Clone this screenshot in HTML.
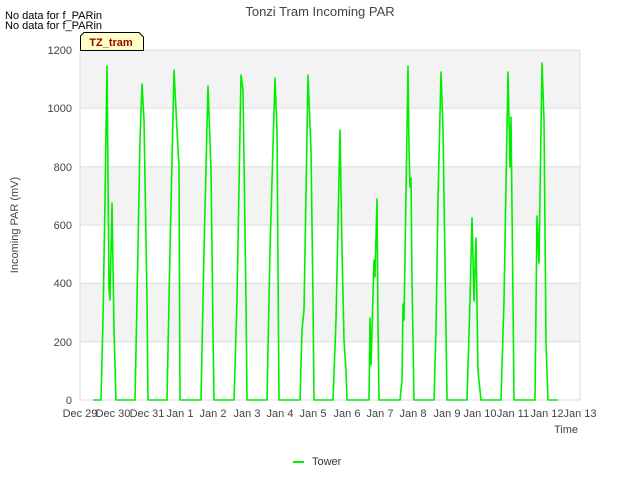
<!DOCTYPE html>
<html><head><style>
html,body{margin:0;padding:0;background:#fff;width:640px;height:480px;overflow:hidden;font-family:"Liberation Sans",sans-serif}
</style></head><body>
<svg width="640" height="480" xmlns="http://www.w3.org/2000/svg" font-family="Liberation Sans, sans-serif">
<rect x="80" y="50" width="500" height="350" fill="#fff"/>
<rect x="80" y="50" width="500" height="58.3" fill="#f3f3f3"/>
<rect x="80" y="166.7" width="500" height="58.3" fill="#f3f3f3"/>
<rect x="80" y="283.3" width="500" height="58.3" fill="#f3f3f3"/>
<g stroke="#dddddd" stroke-width="1">
<line x1="80" y1="50" x2="580" y2="50"/><line x1="80" y1="108.3" x2="580" y2="108.3"/>
<line x1="80" y1="166.7" x2="580" y2="166.7"/><line x1="80" y1="225" x2="580" y2="225"/>
<line x1="80" y1="283.3" x2="580" y2="283.3"/><line x1="80" y1="341.7" x2="580" y2="341.7"/>
<line x1="80" y1="400" x2="580" y2="400"/>
<line x1="80" y1="50" x2="80" y2="400"/><line x1="580" y1="50" x2="580" y2="400"/>
</g>
<polyline fill="none" stroke="#00ee00" stroke-width="1.6" stroke-linejoin="round" points="93,400 101,400 103,320 105,200 107,66 109,289 110,300 112,203 114,330 116,400 135,400 137,300 140,140 142,84 144,120 147,300 148,400 167,400 170,250 174,70 177,130 179,167 180,400 201,400 204,250 208,86 211,170 213,330 214,400 234,400 237,300 241,75 243,90 246,300 247,400 267,400 270,250 275,78 277,130 279,400 300,400 302,330 304,310 308,75 311,150 313,300 314,400 333,400 336,320 340,130 342,250 344,340 346,371 347,400 366,400 369,400 370,318 371,365 374,260 375,277 377,199 378,324 379,400 400,400 402,380 403,304 404,320 408,66 409,150 410,187 411,178 412,280 414,400 434,400 436,330 438,200 441,72 443,130 446,330 447,400 467,400 470,300 472,218 474,301 476,238 478,371 481,400 501,400 504,300 508,72 510,167 511,117 513,300 514,400 533,400 535,400 537,216 539,263 542,63 544,120 546,342 548,400 558,400"/>
<g font-size="11" fill="#444" text-anchor="end">
<text x="72" y="54">1200</text><text x="72" y="112">1000</text><text x="72" y="171">800</text>
<text x="72" y="229">600</text><text x="72" y="287">400</text><text x="72" y="346">200</text><text x="72" y="404">0</text>
</g>
<g font-size="11" fill="#444" text-anchor="middle">
<text x="80" y="417">Dec 29</text><text x="113" y="417">Dec 30</text><text x="147" y="417">Dec 31</text>
<text x="180" y="417">Jan 1</text><text x="213" y="417">Jan 2</text><text x="247" y="417">Jan 3</text>
<text x="280" y="417">Jan 4</text><text x="313" y="417">Jan 5</text><text x="347" y="417">Jan 6</text>
<text x="380" y="417">Jan 7</text><text x="413" y="417">Jan 8</text><text x="447" y="417">Jan 9</text>
<text x="480" y="417">Jan 10</text><text x="513" y="417">Jan 11</text><text x="547" y="417">Jan 12</text>
<text x="580" y="417">Jan 13</text>
</g>
<text x="578" y="433" font-size="11" fill="#444" text-anchor="end">Time</text>
<text x="18" y="225" font-size="11" fill="#444" text-anchor="middle" transform="rotate(-90 18 225)">Incoming PAR (mV)</text>
<text x="320" y="16" font-size="13" fill="#444" text-anchor="middle">Tonzi Tram Incoming PAR</text>
<text x="5" y="19" font-size="11" fill="#000">No data for f_PARin</text>
<text x="5" y="29" font-size="11" fill="#000">No data for f_PARin</text>
<path d="M80.5,50.5 L80.5,36 L84,32.5 L139,32.5 L143.5,37 L143.5,50.5 Z" fill="#ffffc8" stroke="#000" stroke-width="1"/>
<text x="111" y="46" font-size="11" font-weight="bold" fill="#990000" text-anchor="middle">TZ_tram</text>
<line x1="293" y1="462" x2="304" y2="462" stroke="#00ee00" stroke-width="2"/>
<text x="312" y="465" font-size="11" fill="#333">Tower</text>
</svg>
</body></html>
